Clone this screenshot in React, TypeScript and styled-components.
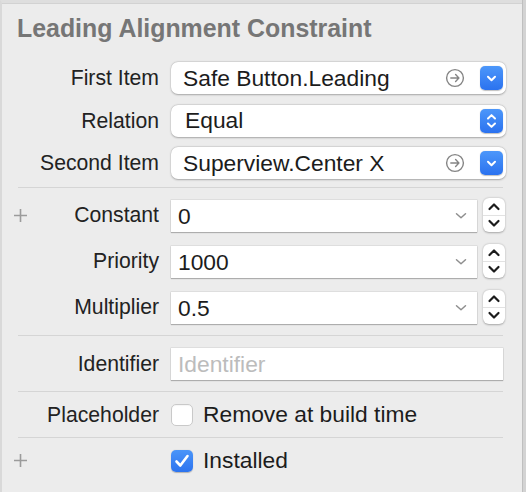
import React from "react";
import styled, { createGlobalStyle } from "styled-components";

const Global = createGlobalStyle`
  html, body { margin: 0; padding: 0; background: #ececec; }
  body { font-family: "Liberation Sans", Arial, sans-serif; -webkit-font-smoothing: antialiased; }
`;

const Root = styled.div`
  display: flex;
  width: 526px;
  height: 492px;
  overflow: hidden;
  background: #ececec;
`;

const Panel = styled.div`
  flex: 1;
  display: flex;
  flex-direction: column;
  border-left: 2px solid #d9d9d9;
  border-top: 3px solid #dedede;
  box-shadow: inset 0 1px 0 #d2d2d2;
  padding-right: 19px;
`;

const Scroll = styled.div`
  width: 3px;
  background: #d3d3d3;
  border-left: 1px solid #bfbfbf;
`;

const Title = styled.div`
  margin: 13px 0 0 15px;
  font-weight: bold;
  font-size: 24.9px;
  line-height: 24px;
  color: #767676;
`;

const Group = styled.div<{ $pt?: number; $pb?: number; $gap?: number }>`
  display: flex;
  flex-direction: column;
  padding-top: ${(p) => p.$pt ?? 0}px;
  padding-bottom: ${(p) => p.$pb ?? 0}px;
  gap: ${(p) => p.$gap ?? 0}px;
`;

const Row = styled.div<{ $h: number }>`
  display: grid;
  grid-template-columns: 157px 1fr;
  column-gap: 12px;
  height: ${(p) => p.$h}px;
  align-items: center;
`;

const LabelCell = styled.div`
  display: flex;
  align-items: center;
  justify-content: flex-end;
  height: 100%;
`;

const Label = styled.span`
  font-size: 21.2px;
  color: #222222;
  white-space: nowrap;
`;

const PlusBox = styled.span`
  margin-right: auto;
  margin-left: 11px;
  display: flex;
`;

const Divider = styled.div<{ $mt?: number }>`
  height: 1px;
  background: #d5d5d5;
  margin: ${(p) => p.$mt ?? 0}px 0 0 16px;
`;

const PopUp = styled.div<{ $pl?: number }>`
  height: 32px;
  margin-right: -3px;
  background: #ffffff;
  border-radius: 7px;
  box-shadow: 0 0.5px 2px rgba(0, 0, 0, 0.28), 0 0 0 0.5px rgba(0, 0, 0, 0.06);
  display: flex;
  align-items: center;
  padding-left: ${(p) => p.$pl ?? 12}px;
  padding-right: 3px;
  box-sizing: border-box;
`;

const Value = styled.span<{ $muted?: boolean }>`
  flex: 1;
  font-size: 22.8px;
  color: ${(p) => (p.$muted ? "#bcbcbc" : "#1c1c1c")};
  white-space: nowrap;
`;

const GoIcon = styled.span`
  display: flex;
  margin-right: 15px;
`;

const BlueButton = styled.span`
  width: 23px;
  height: 24px;
  border-radius: 5px;
  background: linear-gradient(#4c97fa, #2b72ef);
  box-shadow: 0 0.5px 1px rgba(0, 0, 0, 0.25);
  display: flex;
  align-items: center;
  justify-content: center;
`;

const StepRow = styled.div`
  display: flex;
  align-items: flex-end;
  gap: 6px;
  height: 100%;
  margin-right: -2px;
`;

const Combo = styled.div`
  flex: 1;
  height: 32px;
  background: #ffffff;
  box-shadow: 0 1px 1px rgba(0, 0, 0, 0.22), 0 0 0 0.5px rgba(0, 0, 0, 0.12);
  display: flex;
  align-items: center;
  padding: 0 10px 0 7px;
  box-sizing: border-box;
`;

const Stepper = styled.div`
  width: 22px;
  height: 34px;
  background: #ffffff;
  border-radius: 6px;
  box-shadow: 0 0.5px 2px rgba(0, 0, 0, 0.3);
  display: flex;
  flex-direction: column;
  overflow: hidden;
`;

const StepHalf = styled.span<{ $top?: boolean }>`
  flex: 1;
  display: flex;
  align-items: center;
  justify-content: center;
  border-bottom: ${(p) => (p.$top ? "1px solid #e2e2e2" : "none")};
`;

const TextField = styled.div`
  height: 32px;
  background: #ffffff;
  box-shadow: 0 1px 1px rgba(0, 0, 0, 0.22), 0 0 0 0.5px rgba(0, 0, 0, 0.12);
  display: flex;
  align-items: center;
  padding-left: 7px;
`;

const CheckLine = styled.label`
  display: flex;
  align-items: center;
  gap: 10px;
`;

const Box = styled.span<{ $checked?: boolean }>`
  width: 22px;
  height: 22px;
  box-sizing: border-box;
  border-radius: 5px;
  display: flex;
  align-items: center;
  justify-content: center;
  background: ${(p) => (p.$checked ? "linear-gradient(#4a95f9, #2c73ef)" : "#ffffff")};
  border: ${(p) => (p.$checked ? "none" : "1px solid #c9c9c9")};
  box-shadow: ${(p) => (p.$checked ? "0 0.5px 1px rgba(0,0,0,0.25)" : "inset 0 1px 1px rgba(0,0,0,0.04)")};
`;

const Plus = () => (
  <svg width="15" height="15" viewBox="0 0 15 15">
    <path d="M7.5 1v13M1 7.5h13" stroke="#9b9b9b" strokeWidth="1.6" />
  </svg>
);

const Go = () => (
  <svg width="20" height="20" viewBox="0 0 20 20">
    <circle cx="10" cy="10" r="8.4" fill="none" stroke="#858585" strokeWidth="1.4" />
    <path d="M5.8 10h8M10.6 6.6l3.3 3.4-3.3 3.4" fill="none" stroke="#858585" strokeWidth="1.4" strokeLinecap="round" strokeLinejoin="round" />
  </svg>
);

const WhiteDown = () => (
  <svg width="11" height="7" viewBox="0 0 11 7">
    <path d="M2 1.8l3.5 3.4 3.5-3.4" fill="none" stroke="#ffffff" strokeWidth="2" strokeLinecap="round" strokeLinejoin="round" />
  </svg>
);

const WhiteUpDown = () => (
  <svg width="11" height="18" viewBox="0 0 11 18">
    <path d="M2 6.5l3.5-3.4 3.5 3.4M2 11.5l3.5 3.4 3.5-3.4" fill="none" stroke="#ffffff" strokeWidth="2" strokeLinecap="round" strokeLinejoin="round" />
  </svg>
);

const GrayDown = () => (
  <svg width="12" height="8" viewBox="0 0 12 8">
    <path d="M1.5 1.8l4.5 4 4.5-4" fill="none" stroke="#8e8e8e" strokeWidth="1.5" strokeLinecap="round" strokeLinejoin="round" />
  </svg>
);

const Chev = ({ up }: { up?: boolean }) => (
  <svg width="14" height="9" viewBox="0 0 14 9">
    <path
      d={up ? "M2.5 7l4.5-4.5 4.5 4.5" : "M2.5 2l4.5 4.5 4.5-4.5"}
      fill="none"
      stroke="#1c1c1c"
      strokeWidth="2.2"
      strokeLinecap="round"
      strokeLinejoin="round"
    />
  </svg>
);

const Check = () => (
  <svg width="16" height="14" viewBox="0 0 16 14">
    <path d="M2.5 7.5l3.8 4 7.2-9.5" fill="none" stroke="#ffffff" strokeWidth="2.6" strokeLinecap="round" strokeLinejoin="round" />
  </svg>
);

const popRows = [
  { label: "First Item", value: "Safe Button.Leading", go: true },
  { label: "Relation", value: "Equal", go: false },
  { label: "Second Item", value: "Superview.Center X", go: true },
];

const stepRows = [
  { label: "Constant", value: "0", plus: true },
  { label: "Priority", value: "1000", plus: false },
  { label: "Multiplier", value: "0.5", plus: false },
];

export default function App() {
  return (
    <Root>
      <Global />
      <Panel>
        <Title>Leading Alignment Constraint</Title>
        <Group $pt={22} $gap={10.5}>
          {popRows.map((r) => (
            <Row $h={32} key={r.label}>
              <LabelCell>
                <Label>{r.label}</Label>
              </LabelCell>
              <PopUp $pl={r.go ? 12 : 14}>
                <Value>{r.value}</Value>
                {r.go && (
                  <GoIcon>
                    <Go />
                  </GoIcon>
                )}
                <BlueButton>{r.go ? <WhiteDown /> : <WhiteUpDown />}</BlueButton>
              </PopUp>
            </Row>
          ))}
        </Group>
        <Divider $mt={8} />
        <Group $pt={10} $gap={12}>
          {stepRows.map((r) => (
            <Row $h={34} key={r.label}>
              <LabelCell>
                {r.plus && (
                  <PlusBox>
                    <Plus />
                  </PlusBox>
                )}
                <Label>{r.label}</Label>
              </LabelCell>
              <StepRow>
                <Combo>
                  <Value>{r.value}</Value>
                  <GrayDown />
                </Combo>
                <Stepper>
                  <StepHalf $top>
                    <Chev up />
                  </StepHalf>
                  <StepHalf>
                    <Chev />
                  </StepHalf>
                </Stepper>
              </StepRow>
            </Row>
          ))}
        </Group>
        <Divider $mt={11} />
        <Group $pt={12} $pb={11}>
          <Row $h={32}>
            <LabelCell>
              <Label>Identifier</Label>
            </LabelCell>
            <TextField>
              <Value $muted>Identifier</Value>
            </TextField>
          </Row>
        </Group>
        <Divider />
        <Group>
          <Row $h={45}>
            <LabelCell>
              <Label>Placeholder</Label>
            </LabelCell>
            <CheckLine>
              <Box />
              <Value>Remove at build time</Value>
            </CheckLine>
          </Row>
        </Group>
        <Divider />
        <Group>
          <Row $h={45}>
            <LabelCell>
              <PlusBox>
                <Plus />
              </PlusBox>
            </LabelCell>
            <CheckLine>
              <Box $checked>
                <Check />
              </Box>
              <Value>Installed</Value>
            </CheckLine>
          </Row>
        </Group>
      </Panel>
      <Scroll />
    </Root>
  );
}
